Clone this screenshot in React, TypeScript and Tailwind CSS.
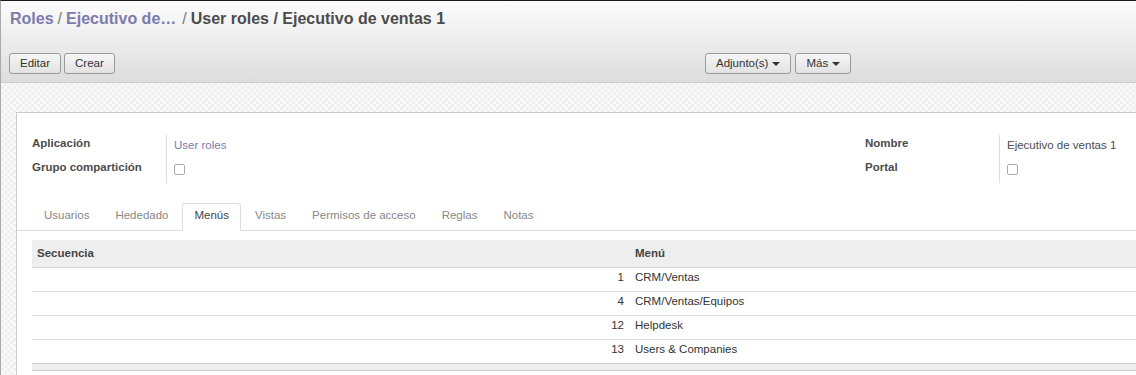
import React from "react";

const Caret = () => (
    <span className="ml-[4px] inline-block w-0 h-0 border-x-[4px] border-x-transparent border-t-[4px] border-t-[#333]" />
);

const Btn = ({children}: {children: React.ReactNode}) => (
    <button className="h-[21px] px-[10px] flex items-center border border-[#9a9a9a] rounded-[3px] bg-linear-to-b from-[#f6f6f6] to-[#e2e2e2] text-[#333] text-[11.5px] leading-none">
        {children}
    </button>
);

const Checkbox = () => <span className="block w-[11px] h-[11px] border border-[#aaa] rounded-[2px] bg-white" />;

const tabs = ["Usuarios", "Hededado", "Menús", "Vistas", "Permisos de acceso", "Reglas", "Notas"];

const rows = [
    {seq: 1, menu: "CRM/Ventas"},
    {seq: 4, menu: "CRM/Ventas/Equipos"},
    {seq: 12, menu: "Helpdesk"},
    {seq: 13, menu: "Users & Companies"},
];

export default function App() {
    return (
        <div className="w-[1136px] h-[375px] overflow-hidden flex flex-col bg-white border-t border-t-[#1a1a1a] border-l border-l-[#aaa] font-['Liberation_Sans',Arial,sans-serif] text-[11.5px] text-[#4c4c4c]">
            {/* control panel */}
            <div className="h-[82px] shrink-0 flex flex-col pl-[8px] bg-linear-to-b from-[#fcfcfc] to-[#dddddd] border-b border-[#cccccc]">
                <div className="mt-[8px] ml-[1px] h-[20px] flex items-center text-[16px] leading-[20px] font-bold">
                    <span className="text-[#7c7bad]">Roles</span>
                    <span className="px-[4px] font-normal text-[#777]">/</span>
                    <span className="text-[#7c7bad]">Ejecutivo de…</span>
                    <span className="pl-[6px] pr-[4px] font-normal text-[#777]">/</span>
                    <span className="text-[#4c4c4c]">User roles / Ejecutivo de ventas 1</span>
                </div>
                <div className="mt-[24px] grid grid-cols-[696px_1fr]">
                    <div className="flex gap-[3px]">
                        <Btn>Editar</Btn>
                        <Btn>Crear</Btn>
                    </div>
                    <div className="flex gap-[4px]">
                        <Btn>Adjunto(s)<Caret /></Btn>
                        <Btn>Más<Caret /></Btn>
                    </div>
                </div>
            </div>

            {/* checkered content area */}
            <div className="flex-1 flex flex-col pl-[15px] pt-[29px] bg-[#f5f5f5] bg-[image:repeating-conic-gradient(#efefef_0%_25%,#f9f9f9_0%_50%)] bg-[length:6px_6px]">
                <div className="flex-1 bg-white border-t border-l border-[#cccccc] pt-[18px]">
                    {/* fields */}
                    <div className="flex pl-[15px]">
                        <div className="w-[833px] flex">
                            <div className="w-[134px] font-bold">
                                <div className="h-[24px] leading-[24px]">Aplicación</div>
                                <div className="h-[24px] leading-[24px]">Grupo compartición</div>
                            </div>
                            <div className="mt-[4px] h-[48px] border-l border-[#dddddd] pl-[7px]">
                                <div className="h-[20px] leading-[20px] text-[#7c7bad]">User roles</div>
                                <div className="mt-[9px]"><Checkbox /></div>
                            </div>
                        </div>
                        <div className="flex">
                            <div className="w-[134px] font-bold">
                                <div className="h-[24px] leading-[24px]">Nombre</div>
                                <div className="h-[24px] leading-[24px]">Portal</div>
                            </div>
                            <div className="mt-[4px] h-[48px] border-l border-[#dddddd] pl-[7px]">
                                <div className="h-[20px] leading-[20px]">Ejecutivo de ventas 1</div>
                                <div className="mt-[9px]"><Checkbox /></div>
                            </div>
                        </div>
                    </div>

                    {/* tabs */}
                    <ul className="mt-[20px] flex pl-[15px] border-b border-[#dddddd]">
                        {tabs.map((t) => {
                            const active = t === "Menús";
                            return (
                                <li key={t} className="-mb-px mr-[2px]">
                                    <div className={active
                                        ? "h-[28px] px-[11px] pt-[2px] leading-[18px] bg-white border border-[#dddddd] border-b-white rounded-t-[3px] text-[#444]"
                                        : "h-[28px] px-[11px] pt-[2px] leading-[18px] border border-transparent text-[#888]"}>
                                        {t}
                                    </div>
                                </li>
                            );
                        })}
                    </ul>

                    {/* one2many list */}
                    <div className="mt-[9px] ml-[15px]">
                        <div className="h-[28px] grid grid-cols-[597px_1fr] bg-[#eeeeee] border-b border-[#d6d6d6] font-bold text-[#444] leading-[27px]">
                            <div className="pl-[5px]">Secuencia</div>
                            <div className="pl-[6px]">Menú</div>
                        </div>
                        {rows.map((r, i) => (
                            <div
                                key={r.seq}
                                className={i < rows.length - 1
                                    ? "h-[24px] pt-[1px] grid grid-cols-[597px_1fr] border-b border-[#dddddd] leading-[17px] text-[#333]"
                                    : "h-[23px] pt-[1px] grid grid-cols-[597px_1fr] leading-[17px] text-[#333]"}>
                                <div className="pr-[5px] text-right">{r.seq}</div>
                                <div className="pl-[6px]">{r.menu}</div>
                            </div>
                        ))}
                        <div className="h-[8px] bg-[#eeeeee] border-y border-[#cccccc]" />
                    </div>
                </div>
            </div>
        </div>
    );
}
